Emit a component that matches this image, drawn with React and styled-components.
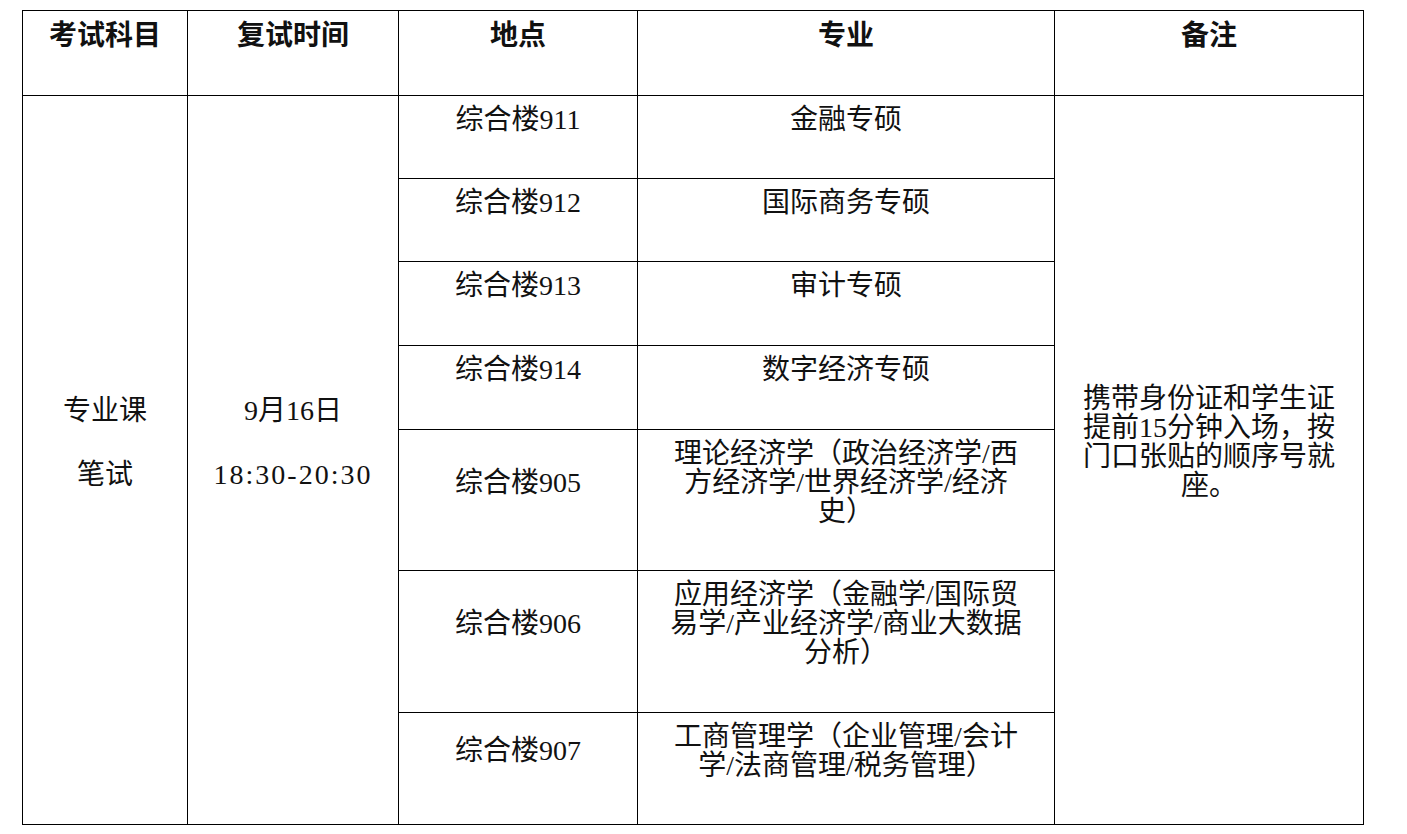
import React from "react";
import styled, { createGlobalStyle } from "styled-components";

const Global = createGlobalStyle`
  html, body { margin: 0; padding: 0; background: #fff; }
  body {
    font-family: "Liberation Serif", "Noto Sans CJK SC", serif;
    color: #000;
  }
`;

const Page = styled.div`
  padding: 10px 0 0 22px;
`;

const Table = styled.table`
  border-collapse: collapse;
  table-layout: fixed;
  width: 1341px;
  font-family: "Liberation Serif", "Noto Sans CJK SC", serif;
  font-size: 28px;
  color: #111;
`;

const Row = styled.tr`
  height: ${(p) => p.$h}px;
`;

const HeadCell = styled.th`
  border: 1px solid #000;
  font-weight: 700;
  text-align: center;
  vertical-align: middle;
  padding: 0 4px 36px;
  line-height: 29px;
  white-space: nowrap;
`;

const Cell = styled.td`
  border: 1px solid #000;
  text-align: center;
  vertical-align: middle;
  padding: 0 4px 36px;
  line-height: 29px;
  font-weight: 400;
`;

const Lines = styled.div`
  display: flex;
  flex-direction: column;
  align-items: center;
  gap: ${(p) => p.$gap || 0}px;
`;

const Line = styled.span`
  display: block;
  white-space: nowrap;
  letter-spacing: ${(p) => p.$spread || 0}px;
`;

const rooms = [
  { room: "综合楼911", major: ["金融专硕"], h: 83 },
  { room: "综合楼912", major: ["国际商务专硕"], h: 83 },
  { room: "综合楼913", major: ["审计专硕"], h: 84 },
  { room: "综合楼914", major: ["数字经济专硕"], h: 84 },
  { room: "综合楼905", major: ["理论经济学（政治经济学/西", "方经济学/世界经济学/经济", "史）"], h: 141 },
  { room: "综合楼906", major: ["应用经济学（金融学/国际贸", "易学/产业经济学/商业大数据", "分析）"], h: 142 },
  { room: "综合楼907", major: ["工商管理学（企业管理/会计", "学/法商管理/税务管理）"], h: 112 },
];

export default function App() {
  return (
    <>
      <Global />
      <Page>
        <Table>
          <colgroup>
            <col style={{ width: 165 }} />
            <col style={{ width: 211 }} />
            <col style={{ width: 239 }} />
            <col style={{ width: 417 }} />
            <col style={{ width: 309 }} />
          </colgroup>
          <thead>
            <Row $h={85}>
              <HeadCell>考试科目</HeadCell>
              <HeadCell>复试时间</HeadCell>
              <HeadCell>地点</HeadCell>
              <HeadCell>专业</HeadCell>
              <HeadCell>备注</HeadCell>
            </Row>
          </thead>
          <tbody>
            {rooms.map((r, i) => (
              <Row key={r.room} $h={r.h}>
                {i === 0 && (
                  <Cell rowSpan={rooms.length}>
                    <Lines $gap={35}>
                      <Line>专业课</Line>
                      <Line>笔试</Line>
                    </Lines>
                  </Cell>
                )}
                {i === 0 && (
                  <Cell rowSpan={rooms.length}>
                    <Lines $gap={35}>
                      <Line>9月16日</Line>
                      <Line $spread={2}>18:30-20:30</Line>
                    </Lines>
                  </Cell>
                )}
                <Cell>{r.room}</Cell>
                <Cell>
                  <Lines>
                    {r.major.map((m) => (
                      <Line key={m}>{m}</Line>
                    ))}
                  </Lines>
                </Cell>
                {i === 0 && (
                  <Cell rowSpan={rooms.length}>
                    <Lines>
                      <Line>携带身份证和学生证</Line>
                      <Line>提前15分钟入场，按</Line>
                      <Line>门口张贴的顺序号就</Line>
                      <Line>座。</Line>
                    </Lines>
                  </Cell>
                )}
              </Row>
            ))}
          </tbody>
        </Table>
      </Page>
    </>
  );
}
